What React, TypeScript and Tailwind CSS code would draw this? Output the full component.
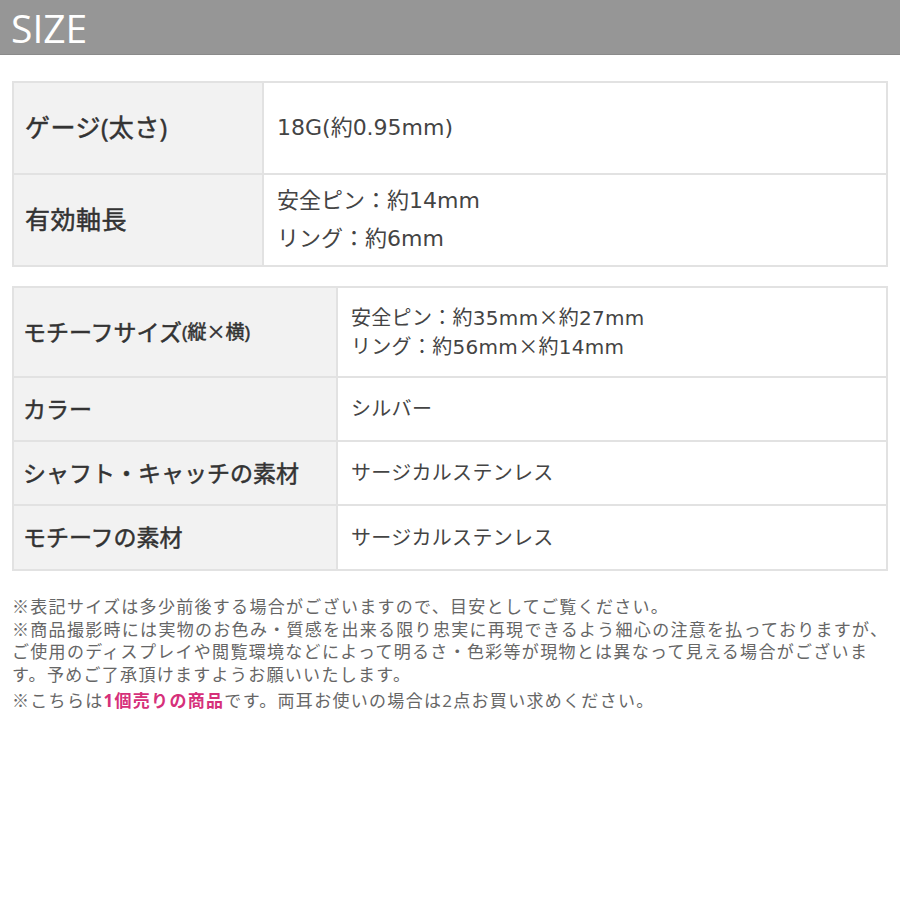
const jp = "font-['Open_Sans','Noto_Sans_CJK_JP',sans-serif]";
const val = "font-['DejaVu_Sans','Noto_Sans_CJK_JP',sans-serif]";

type Row = { label: React.ReactNode; value: React.ReactNode; h: string };

// full-width × from the CJK font
const X = () => <span className="font-['Noto_Sans_CJK_JP',sans-serif]">×</span>;

const topRows: Row[] = [
  { label: "ゲージ(太さ)", value: "18G(約0.95mm)", h: "h-[90px]" },
  {
    label: "有効軸長",
    value: (
      <>
        <div>安全ピン：約14mm</div>
        <div>リング：約6mm</div>
      </>
    ),
    h: "h-[92px]",
  },
];

const bottomRows: Row[] = [
  {
    label: (
      <>
        モチーフサイズ<span className="text-[19px]">(縦<X />横)</span>
      </>
    ),
    value: (
      <div className="leading-[28px]">
        <div>安全ピン：約35mm<X />約27mm</div>
        <div>リング：約56mm<X />約14mm</div>
      </div>
    ),
    h: "h-[88px]",
  },
  { label: "カラー", value: "シルバー", h: "h-[64px]" },
  { label: "シャフト・キャッチの素材", value: "サージカルステンレス", h: "h-[64px]" },
  { label: "モチーフの素材", value: "サージカルステンレス", h: "h-[65px]" },
];

function SpecTable({ rows, labelW, big }: { rows: Row[]; labelW: string; big: boolean }) {
  return (
    <div className="mx-[12px] border-2 border-[#e2e2e2]">
      {rows.map((r, i) => (
        <div
          key={i}
          className={`grid ${labelW} ${r.h} ${i > 0 ? "border-t-2 border-[#e2e2e2]" : ""}`}
        >
          <div
            className={`flex items-center bg-[#f2f2f2] border-r-2 border-[#e2e2e2] text-[#333] font-normal [-webkit-text-stroke:0.5px_#333] ${
              big ? "pl-[11px] text-[25px] tracking-[0.5px]" : "pl-[9px] text-[23px]"
            }`}
          >
            {r.label}
          </div>
          <div
            className={`flex flex-col justify-center text-[#444] ${val} ${
              big ? "pl-[13px] text-[22px] leading-[38px]" : "pl-[13px] text-[20px] tracking-[0.3px]"
            }`}
          >
            {r.value}
          </div>
        </div>
      ))}
    </div>
  );
}

export default function App() {
  return (
    <div className={`w-[900px] h-[900px] bg-white ${jp}`}>
      <div className="h-[55px] bg-[#969696] border-b border-[#8a8a8a] flex items-center pl-[11px]">
        <span className="text-white text-[39px] leading-none font-medium">SIZE</span>
      </div>

      <div className="mt-[26px]">
        <SpecTable rows={topRows} labelW="grid-cols-[250px_1fr]" big />
      </div>

      <div className="mt-[19px]">
        <SpecTable rows={bottomRows} labelW="grid-cols-[324px_1fr]" big={false} />
      </div>

      <div className="mt-[25px] px-[12px] text-[17px] leading-[22.5px] tracking-[1.3px] text-[#666] whitespace-nowrap">
        <div>※表記サイズは多少前後する場合がございますので、目安としてご覧ください。</div>
        <div>※商品撮影時には実物のお色み・質感を出来る限り忠実に再現できるよう細心の注意を払っておりますが、</div>
        <div>ご使用のディスプレイや閲覧環境などによって明るさ・色彩等が現物とは異なって見える場合がございま</div>
        <div>す。予めご了承頂けますようお願いいたします。</div>
        <div className="mt-[4px]">
          ※こちらは<span className="text-[#d6307a] font-bold">1個売りの商品</span>
          です。両耳お使いの場合は2点お買い求めください。
        </div>
      </div>
    </div>
  );
}
